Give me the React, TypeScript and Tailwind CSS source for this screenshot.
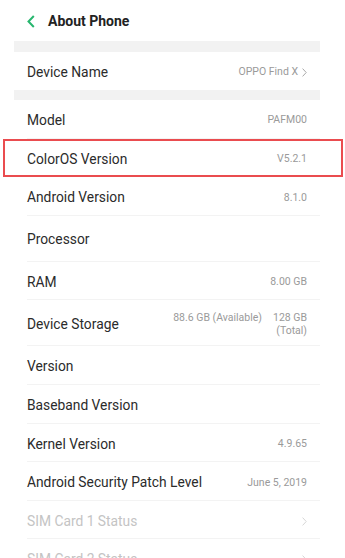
import React from 'react'

type Row = {
  label: string
  value?: React.ReactNode
  arrow?: boolean
  tall?: boolean
  disabled?: boolean
  highlight?: boolean
}

const rows: Row[] = [
  { label: 'Model', value: 'PAFM00' },
  { label: 'ColorOS Version', value: 'V5.2.1', highlight: true },
  { label: 'Android Version', value: '8.1.0' },
  { label: 'Processor', tall: true },
  { label: 'RAM', value: '8.00 GB' },
  {
    label: 'Device Storage',
    tall: true,
    value: (
      <div className="flex items-start gap-[11px] leading-[13px]">
        <span>88.6 GB (Available)</span>
        <span className="text-right">
          128 GB
          <br />
          (Total)
        </span>
      </div>
    ),
  },
  { label: 'Version' },
  { label: 'Baseband Version' },
  { label: 'Kernel Version', value: '4.9.65' },
  { label: 'Android Security Patch Level', value: 'June 5, 2019' },
  { label: 'SIM Card 1 Status', arrow: true, disabled: true },
  { label: 'SIM Card 2 Status', arrow: true, disabled: true },
]

function Chevron({ light }: { light?: boolean }) {
  return (
    <svg width="5" height="9" viewBox="0 0 5 9" className="ml-[4px]">
      <path d="M0.6 0.6 L4.2 4.5 L0.6 8.4" fill="none" stroke={light ? '#d6d6d6' : '#a8a8a8'} strokeWidth="1" />
    </svg>
  )
}

function SettingRow({ row, last }: { row: Row; last?: boolean }) {
  return (
    <div className={`relative flex items-center justify-between px-[13px] pt-[2px] ${row.tall ? 'h-[46px]' : 'h-[38.6px]'}`}>
      <span className={`text-[13.8px] ${row.disabled ? 'text-[#c4c4c4]' : 'text-[#2b2b2b]'}`}>{row.label}</span>
      <div className="flex items-center text-[10.5px] text-[#9a9a9a]">
        {row.value}
        {row.arrow && <Chevron light={row.disabled} />}
      </div>
      {!last && <div className="absolute bottom-0 left-[13px] right-0 h-px bg-[#f3f3f3]" />}
      {row.highlight && (
        <div className="absolute -left-[11px] -right-[23px] top-0 bottom-0 border-2 border-[#ea4c4f]" />
      )}
    </div>
  )
}

export default function App() {
  return (
    <div className="h-[558px] w-[345px] overflow-hidden bg-white font-['Roboto',sans-serif]">
      <div className="flex h-[41px] items-center pl-[27px] pt-[2px]">
        <svg width="8" height="13" viewBox="0 0 8 13">
          <path d="M6.8 1 L1.5 6.5 L6.8 12" fill="none" stroke="#27b66e" strokeWidth="2" />
        </svg>
        <span className="ml-[13px] text-[14px] font-bold text-[#222]">About Phone</span>
      </div>
      <div className="mx-[14px] w-[306px]">
        <div className="h-[11px] bg-[#f2f2f2]" />
        <div className="flex h-[38px] items-center justify-between px-[13px] pt-[2px]">
          <span className="text-[13.8px] text-[#2b2b2b]">Device Name</span>
          <div className="flex items-center text-[10.5px] text-[#9a9a9a]">
            OPPO Find X
            <Chevron />
          </div>
        </div>
        <div className="h-[10px] bg-[#f2f2f2]" />
        {rows.map((r, i) => (
          <SettingRow key={r.label} row={r} last={i === rows.length - 1} />
        ))}
      </div>
    </div>
  )
}
